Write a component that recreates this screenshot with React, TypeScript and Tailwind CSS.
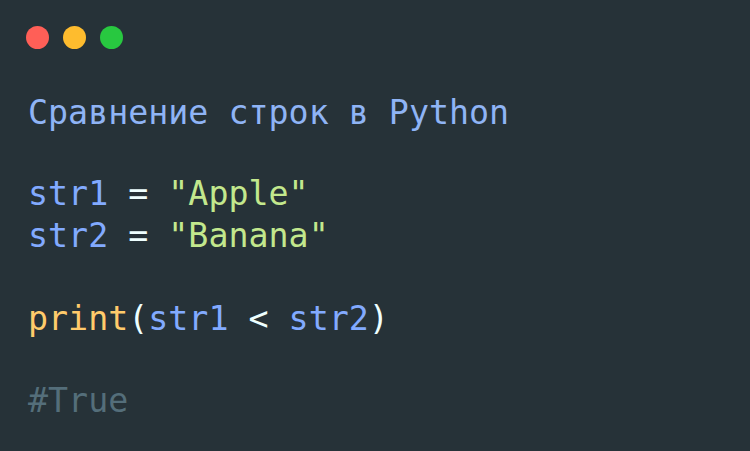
import React from "react";

const mono = { fontFamily: '"DejaVu Sans Mono", "Liberation Mono", monospace' };

export default function App() {
  return (
    <div className="w-[750px] h-[451px] bg-[#263238] overflow-hidden" style={mono}>
      <div className="flex gap-[14px] pl-[26px] pt-[26px]">
        <span className="w-[23px] h-[23px] rounded-full bg-[#ff5f57]" />
        <span className="w-[23px] h-[23px] rounded-full bg-[#febc2e]" />
        <span className="w-[23px] h-[23px] rounded-full bg-[#28c840]" />
      </div>
      <div className="pl-[28px] pt-[43px] text-[33.3px] leading-[42px] whitespace-pre text-[#eeffff]">
        <div className="text-[#8fb4f5]">Сравнение строк в Python</div>
        <div className="h-[39px]" />
        <div>
          <span className="text-[#82aaff]">str1</span> = <span className="text-[#c3e88d]">"Apple"</span>
        </div>
        <div>
          <span className="text-[#82aaff]">str2</span> = <span className="text-[#c3e88d]">"Banana"</span>
        </div>
        <div className="h-[41px]" />
        <div>
          <span className="text-[#ffcb6b]">print</span>(<span className="text-[#82aaff]">str1</span> &lt; <span className="text-[#82aaff]">str2</span>)
        </div>
        <div className="h-[40px]" />
        <div className="text-[#546e7a]">#True</div>
      </div>
    </div>
  );
}
